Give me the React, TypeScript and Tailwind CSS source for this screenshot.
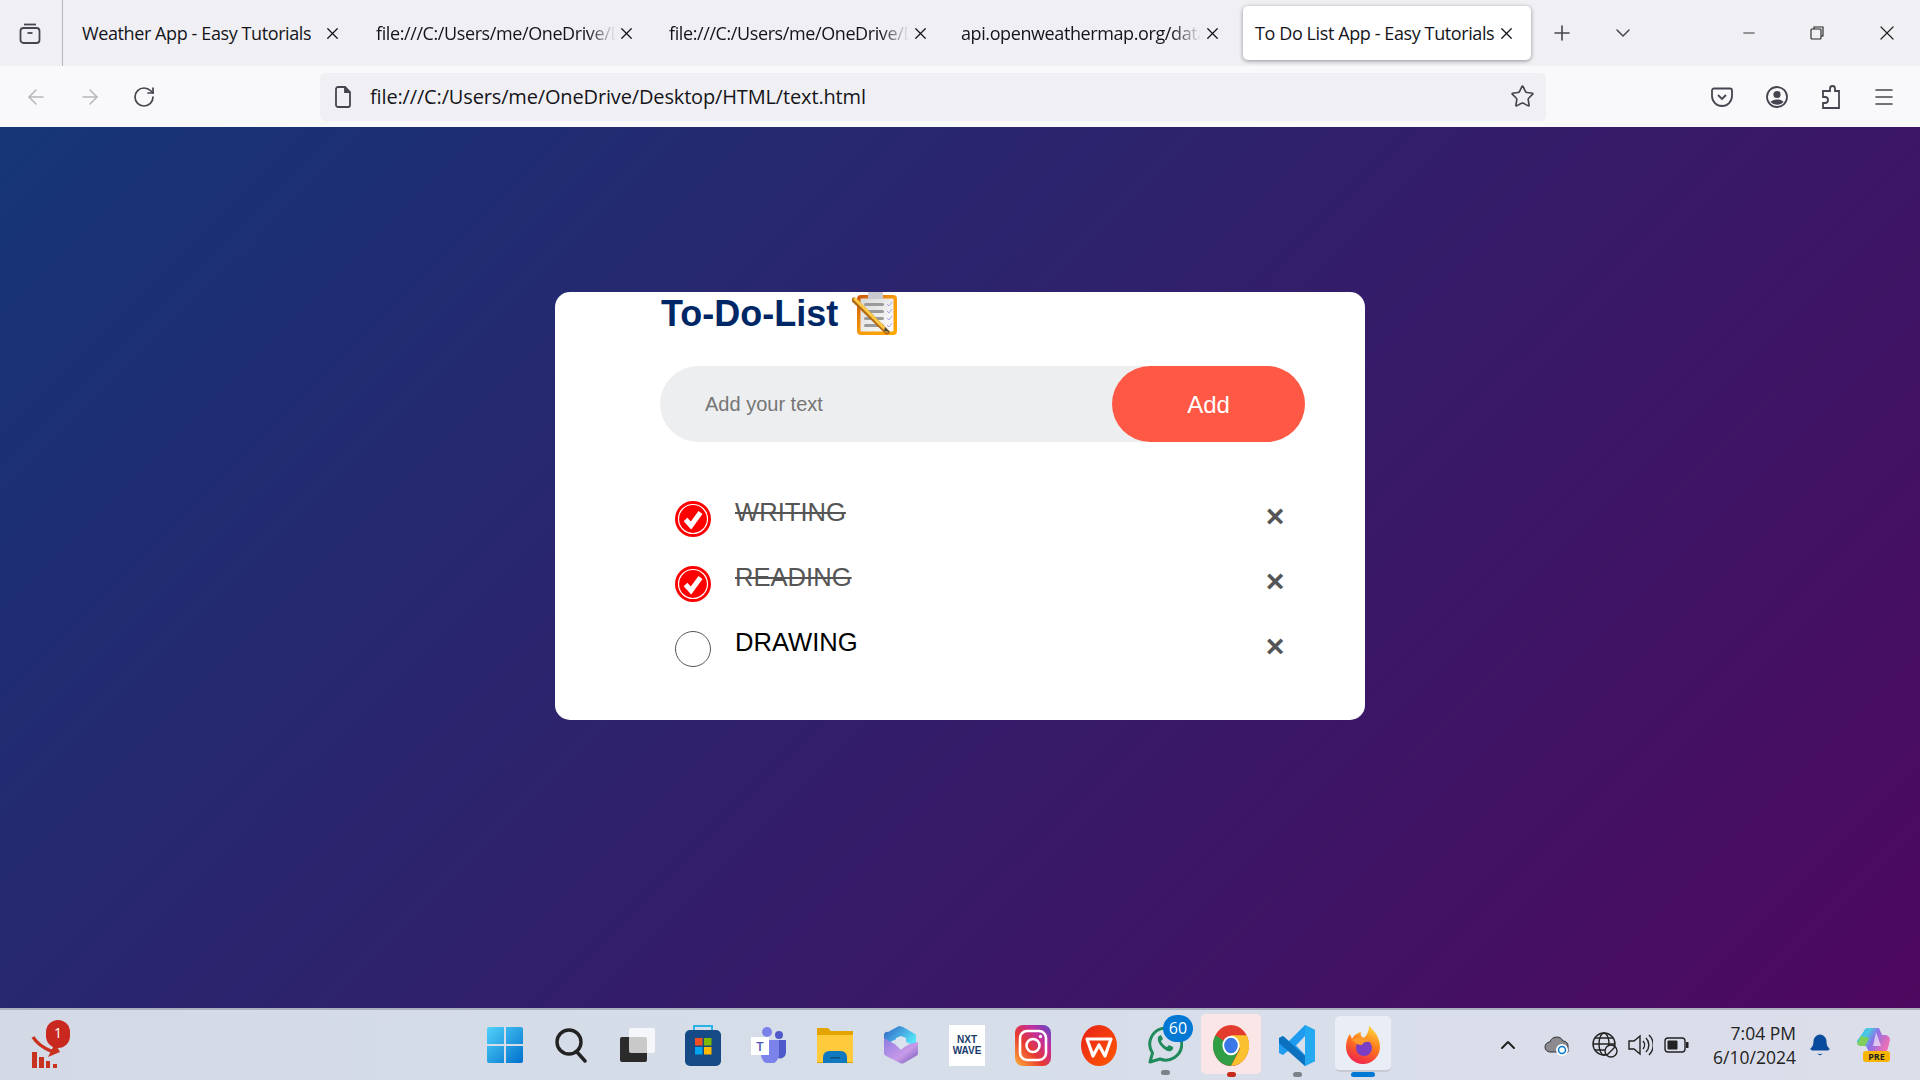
import { ArrowLeft, ArrowRight, RotateCw, Star, Menu, Plus, ChevronDown, ChevronUp, X, Minus, Bell } from "lucide-react";

const uiFont = "font-['Open_Sans',sans-serif]";

function ClipboardIcon() {
  return (
    <svg width="46" height="44" viewBox="0 0 46 44">
      <defs>
        <linearGradient id="board" x1="0" y1="0" x2="1" y2="1">
          <stop offset="0" stopColor="#c9540a" />
          <stop offset="0.5" stopColor="#f79a0e" />
          <stop offset="1" stopColor="#ffa800" />
        </linearGradient>
        <linearGradient id="sheet" x1="0" y1="0" x2="1" y2="1">
          <stop offset="0" stopColor="#d8d8d8" />
          <stop offset="1" stopColor="#ffffff" />
        </linearGradient>
      </defs>
      <rect x="5" y="3" width="40" height="40" rx="4" fill="url(#board)" />
      <rect x="8.5" y="6.5" width="33" height="33" rx="1" fill="url(#sheet)" />
      <rect x="16" y="0" width="15" height="7" rx="1" fill="#c9c9cf" />
      <rect x="12" y="11" width="20" height="3" rx="1.5" fill="#9a9a9a" />
      <rect x="12" y="18" width="20" height="3" rx="1.5" fill="#9a9a9a" />
      <rect x="12" y="25" width="20" height="3" rx="1.5" fill="#9a9a9a" />
      <rect x="12" y="32" width="20" height="3" rx="1.5" fill="#9a9a9a" />
      <path d="M35 12l2 2 3-4M35 19l2 2 3-4M35 26l2 2 3-4M35 33l2 2 3-4" fill="none" stroke="#a8a8f0" strokeWidth="1" />
      <path d="M2 8L35 40" stroke="#b06a10" strokeWidth="5" strokeLinecap="round" />
      <path d="M3 7L35 39" stroke="#ffc94a" strokeWidth="3" strokeLinecap="round" />
      <path d="M33 35l5 5.5-6-2z" fill="#444" />
    </svg>
  );
}

function CheckIcon({ done }: { done: boolean }) {
  if (!done) return <div className="w-[36px] h-[36px] rounded-full border border-[#555] shrink-0" />;
  return (
    <svg width="36" height="36" viewBox="0 0 36 36" className="shrink-0">
      <circle cx="18" cy="18" r="18" fill="#ff0000" />
      <circle cx="18" cy="18" r="14.5" fill="none" stroke="#fff" strokeWidth="1.2" />
      <path d="M10.5 18.5l5.500 6 9.500-13" fill="none" stroke="#fff" strokeWidth="5" strokeLinejoin="miter" />
    </svg>
  );
}

function TodoRow({ label, done }: { label: string; done: boolean }) {
  return (
    <li className="h-[65px] flex items-start pl-[15px]">
      <div className="mt-[14px]">
        <CheckIcon done={done} />
      </div>
      <span
        className={
          "ml-[24px] mt-[8px] text-[25.6px] leading-[34px] " +
          (done ? "text-[#555] line-through" : "text-black")
        }
      >
        {label}
      </span>
      <span className="ml-auto mr-[10px] mt-[9px] w-[40px] h-[40px] flex items-center justify-center text-[32px] font-bold leading-none text-[#555]">
        ×
      </span>
    </li>
  );
}

function Tab({ title, width, close, fade }: { title: string; width: number; close: number; fade?: boolean }) {
  return (
    <div className="relative h-full flex items-center shrink-0" style={{ width }}>
      <span
        className={
          "block overflow-hidden whitespace-nowrap text-[18px] text-[#15141a] tracking-[-0.4px] " +
          (fade ? "[mask-image:linear-gradient(to_right,black_88%,transparent)]" : "")
        }
        style={{ width: fade ? 240 : undefined }}
      >
        {title}
      </span>
      <X size={19} strokeWidth={1.6} className="absolute top-[24px] text-[#15141a]" style={{ left: close - 9 }} />
    </div>
  );
}

function TabBar() {
  return (
    <div className={"h-[66px] bg-[#f0f0f4] flex items-stretch " + uiFont}>
      <div className="w-[63px] border-r border-[#b5b5bb] flex items-center justify-center shrink-0">
        <svg width="24" height="24" viewBox="0 0 24 24" fill="none" stroke="#45454f" strokeWidth="1.8" className="-ml-[2px]">
          <path d="M6 3.5h12" />
          <rect x="2.5" y="7" width="19" height="15" rx="3" />
          <path d="M9.5 12h5" />
        </svg>
      </div>
      <div className="ml-[19px] flex items-center h-full">
        <Tab title="Weather App - Easy Tutorials" width={294} close={250} />
        <Tab title="file:///C:/Users/me/OneDrive/Des" width={293} close={250} fade />
        <Tab title="file:///C:/Users/me/OneDrive/Des" width={292} close={251} fade />
        <Tab title="api.openweathermap.org/data/2.5" width={282} close={251} fade />
      </div>
      <div className="relative mt-[6px] h-[54px] w-[288px] rounded-[5px] bg-white shadow-[0_1px_4px_rgba(0,0,0,0.4)] flex items-center pl-[12px] shrink-0">
        <span className="text-[18px] text-[#15141a] tracking-[-0.4px] whitespace-nowrap">To Do List App - Easy Tutorials</span>
        <X size={19} strokeWidth={1.6} className="absolute left-[254px] top-[18px] text-[#15141a]" />
      </div>
      <div className="ml-[19px] flex items-center">
        <Plus size={24} strokeWidth={1.6} className="text-[#45454f]" />
        <ChevronDown size={24} strokeWidth={1.5} className="ml-[37px] text-[#45454f]" />
        <Minus size={18} strokeWidth={1.2} className="ml-[105px] text-[#222]" />
        <svg width="16" height="16" viewBox="0 0 16 16" fill="none" stroke="#222" strokeWidth="1.1" className="ml-[51px]">
          <rect x="2" y="4" width="10" height="10" rx="1" />
          <path d="M5 4V2h9v9h-2" />
        </svg>
        <X size={24} strokeWidth={1.2} className="ml-[50px] text-[#222]" />
      </div>
    </div>
  );
}

function Toolbar() {
  return (
    <div className={"h-[61px] bg-[#f9f9fb] flex items-center " + uiFont}>
      <ArrowLeft size={24} strokeWidth={1.5} className="ml-[24px] text-[#b6b6ba]" />
      <ArrowRight size={24} strokeWidth={1.5} className="ml-[30px] text-[#b6b6ba]" />
      <RotateCw size={24} strokeWidth={1.7} className="ml-[30px] text-[#45454f]" />
      <div className="ml-[164px] w-[1226px] h-[48px] rounded-[5px] bg-[#f0f0f4] flex items-center shrink-0">
        <svg width="20" height="24" viewBox="0 0 20 24" fill="none" stroke="#45454f" strokeWidth="1.8" className="ml-[13px]">
          <path d="M3 4a2 2 0 012-2h7l5 5v13a2 2 0 01-2 2H5a2 2 0 01-2-2z" />
          <path d="M12 2v5h5" fill="#45454f" />
        </svg>
        <span className="ml-[17px] text-[20px] text-[#15141a] tracking-[-0.15px] whitespace-nowrap">
          file:///C:/Users/me/OneDrive/Desktop/HTML/text.html
        </span>
        <Star size={25} strokeWidth={1.6} className="ml-auto mr-[11px] text-[#45454f]" />
      </div>
      <svg width="24" height="24" viewBox="0 0 24 24" fill="none" stroke="#45454f" strokeWidth="1.8" className="ml-[164px]">
        <path d="M4 3.5h16a2 2 0 012 2V11a10 10 0 01-20 0V5.500a2 2 0 012-2z" />
        <path d="M8 10l4 4 4-4" />
      </svg>
      <svg width="24" height="24" viewBox="0 0 24 24" className="ml-[31px]">
        <circle cx="12" cy="12" r="10" fill="none" stroke="#45454f" strokeWidth="1.8" />
        <circle cx="12" cy="9.5" r="3.6" fill="#45454f" />
        <path d="M5.5 17c2-3.4 11-3.4 13 0a9 9 0 01-13 0z" fill="#45454f" />
      </svg>
      <svg width="24" height="26" viewBox="0 0 24 26" fill="none" stroke="#45454f" strokeWidth="1.8" className="ml-[28px]">
        <path d="M13 7V4.5a2.5 2.5 0 015 0V7h4v17H6v-5h2a3 3 0 000-6H6V7z" />
      </svg>
      <Menu size={24} strokeWidth={1.6} className="ml-[31px] text-[#45454f]" />
    </div>
  );
}

function TodoCard() {
  return (
    <div className="mx-auto mt-[165px] w-[810px] h-[428px] rounded-[15px] bg-white pl-[105px] pr-[60px] font-['Liberation_Sans',Arial,sans-serif]">
      <div className="h-[44px] flex items-center">
        <h2 className="text-[36px] leading-none font-bold text-[#002765] ml-[1px] mt-[-1px]">To-Do-List</h2>
        <div className="ml-[14px]">
          <ClipboardIcon />
        </div>
      </div>
      <div className="mt-[30px] h-[76px] rounded-full bg-[#edeef0] flex items-center">
        <input
          className="flex-1 min-w-0 h-full bg-transparent outline-none pl-[45px] text-[20px] placeholder:text-[#757575]"
          placeholder="Add your text"
        />
        <button className="w-[193px] h-full rounded-full bg-[#ff5945] text-white text-[24px] pt-[1px] shrink-0">Add</button>
      </div>
      <ul className="mt-[45px]">
        <TodoRow label="WRITING" done />
        <TodoRow label="READING" done />
        <TodoRow label="DRAWING" done={false} />
      </ul>
    </div>
  );
}

function Slot({ children, tile, dot }: { children: React.ReactNode; tile?: string; dot?: string }) {
  return (
    <div className="relative w-[66px] h-[70px] flex items-center justify-center shrink-0">
      {tile && <div className={"absolute rounded-[5px] " + tile} />}
      <div className="relative flex items-center justify-center">{children}</div>
      {dot && <div className={"absolute rounded-full " + dot} />}
    </div>
  );
}

function Taskbar() {
  return (
    <div className={"h-[72px] border-t-2 border-[#aab0bd] bg-gradient-to-r from-[#d3dae6] via-[#d6deea] to-[#dcdeea] flex items-center " + uiFont}>
      <div className="relative ml-[30px] w-[40px] h-[48px] shrink-0">
        <svg width="40" height="48" viewBox="0 0 40 48" className="absolute top-[1px] left-0">
          <path d="M3 15c4 7 10 11 20 15" fill="none" stroke="#c8321e" strokeWidth="3.5" />
          <path d="M18 35l12-5-5-9z" fill="#c8321e" />
          <rect x="2" y="30" width="5" height="16" fill="#c8321e" />
          <rect x="9" y="35" width="5" height="11" fill="#c8321e" />
          <rect x="16" y="39" width="4" height="7" fill="#c8321e" />
          <rect x="23" y="42" width="4" height="4" fill="#c8321e" />
        </svg>
        <span className="absolute left-[16px] top-[-1px] w-[24px] h-[28px] rounded-full bg-[#c8281e] text-white text-[14px] leading-[26px] text-center">1</span>
      </div>
      <div className="ml-[402px] flex items-center">
        <Slot>
          <svg width="36" height="36" viewBox="0 0 36 36">
            <defs>
              <linearGradient id="win" x1="0" y1="0" x2="1" y2="1">
                <stop offset="0" stopColor="#52d2fb" />
                <stop offset="1" stopColor="#0070cc" />
              </linearGradient>
            </defs>
            <path d="M0 2a2 2 0 012-2h15v17H0zM19 0h15a2 2 0 012 2v15H19zM0 19h17v17H2a2 2 0 01-2-2zM19 19h17v15a2 2 0 01-2 2H19z" fill="url(#win)" />
          </svg>
        </Slot>
        <Slot>
          <svg width="36" height="36" viewBox="0 0 36 36" fill="none" stroke="#222" strokeWidth="3.4">
            <circle cx="16" cy="15" r="12" />
            <path d="M24 25l8 9" strokeLinecap="round" />
          </svg>
        </Slot>
        <Slot>
          <svg width="36" height="36" viewBox="0 0 36 36">
            <rect x="1" y="10" width="27" height="25" rx="2" fill="#2b2b2b" />
            <rect x="10" y="1" width="26" height="25" rx="2" fill="#ffffff" fillOpacity="0.75" />
          </svg>
        </Slot>
        <Slot>
          <svg width="36" height="42" viewBox="0 0 36 42">
            <path d="M9 7V2h18v5" fill="none" stroke="#28b4e8" strokeWidth="2" />
            <rect x="0" y="6" width="36" height="36" rx="5" fill="#154a86" />
            <rect x="10" y="14" width="7.5" height="7.5" fill="#f25022" />
            <rect x="19" y="14" width="7.5" height="7.5" fill="#7fba00" />
            <rect x="10" y="23" width="7.5" height="7.5" fill="#00a4ef" />
            <rect x="19" y="23" width="7.5" height="7.5" fill="#ffb900" />
          </svg>
        </Slot>
        <Slot>
          <div className="relative w-[36px] h-[36px]">
            <svg width="36" height="36" viewBox="0 0 36 36">
              <circle cx="16" cy="5" r="5" fill="#7b83eb" />
              <circle cx="28" cy="8" r="4" fill="#5059c9" />
              <path d="M22 13h13v13a6 6 0 01-8 5z" fill="#5059c9" />
              <path d="M8 13h20v15a9 9 0 01-18 0z" fill="#7b83eb" />
            </svg>
            <span className="absolute left-0 top-[10px] w-[18px] h-[18px] bg-white text-[#4b53bc] text-[13px] leading-[18px] text-center font-semibold">T</span>
          </div>
        </Slot>
        <Slot>
          <svg width="38" height="36" viewBox="0 0 38 36">
            <path d="M1 1h11l3 3h22v32H1z" fill="#e3a400" />
            <path d="M1 8h36v27H1z" fill="#ffcb3d" />
            <path d="M7 30a6 6 0 016-6h12a6 6 0 016 6v6H7z" fill="#0f78bf" />
            <rect x="14" y="30" width="10" height="1.5" fill="#0a4f80" />
          </svg>
        </Slot>
        <Slot>
          <svg width="34" height="38" viewBox="0 0 34 38">
            <defs>
              <linearGradient id="m365a" x1="0" y1="0" x2="1" y2="0.6">
                <stop offset="0" stopColor="#2f5fc4" />
                <stop offset="1" stopColor="#56e3f8" />
              </linearGradient>
              <linearGradient id="m365b" x1="0" y1="0" x2="1" y2="1">
                <stop offset="0" stopColor="#8d7be0" />
                <stop offset="0.6" stopColor="#c89ae8" />
                <stop offset="1" stopColor="#6a58b8" />
              </linearGradient>
            </defs>
            <path d="M4 6l11-6 4 1 12 7a3 3 0 011 3v9l-8-3-7-6-9 4-8 5v-11a3 3 0 014-3z" fill="url(#m365a)" />
            <path d="M0 12l12 7 5 4 9-5 8-2v11a3 3 0 01-2 3l-12 7a4 4 0 01-4 0L2 30a3 3 0 01-2-3z" fill="url(#m365b)" />
            <path d="M12 12l5-2 5 2v7l-5 5-5-5z" fill="#dbe3ef" />
          </svg>
        </Slot>
        <Slot>
          <div className="w-[36px] h-[41px] bg-white flex flex-col items-center justify-center text-[#1a3a6b] text-[10px] leading-[11px] font-bold font-['Liberation_Sans',sans-serif]">
            <span>NXT</span>
            <span>WAVE</span>
          </div>
        </Slot>
        <Slot>
          <svg width="36" height="41" viewBox="0 0 36 41">
            <defs>
              <linearGradient id="ig" x1="0" y1="1" x2="1" y2="0">
                <stop offset="0" stopColor="#fdb13b" />
                <stop offset="0.4" stopColor="#e8382e" />
                <stop offset="0.7" stopColor="#c42f9c" />
                <stop offset="1" stopColor="#5a49c9" />
              </linearGradient>
            </defs>
            <rect width="36" height="41" rx="8" fill="url(#ig)" />
            <rect x="5" y="6" width="26" height="29" rx="7" fill="none" stroke="#fff" strokeWidth="2.6" />
            <circle cx="18" cy="20.5" r="6.5" fill="none" stroke="#fff" strokeWidth="2.6" />
            <circle cx="25.5" cy="11.5" r="1.7" fill="#fff" />
          </svg>
        </Slot>
        <Slot>
          <svg width="36" height="41" viewBox="0 0 36 41">
            <defs>
              <linearGradient id="wps" x1="0" y1="0" x2="1" y2="1">
                <stop offset="0" stopColor="#e8201a" />
                <stop offset="1" stopColor="#ff5a00" />
              </linearGradient>
            </defs>
            <ellipse cx="18" cy="20.5" rx="18" ry="20.5" fill="url(#wps)" />
            <path d="M6 14h24l-6 17-6-11-6 11z" fill="none" stroke="#fff" strokeWidth="3.2" strokeLinejoin="round" />
          </svg>
        </Slot>
        <Slot dot="bottom-[5px] left-[29px] w-[9px] h-[5px] bg-[#7d8188]">
          <div className="relative">
            <svg width="36" height="40" viewBox="0 0 36 40" fill="none">
              <path d="M3 37l2.5-9A16 16 0 1113 34z" stroke="#1f8a5b" strokeWidth="3" strokeLinejoin="round" />
              <path d="M12 11c-2 2-1.500 6 2 10s7 6 10 5c2-1 2.500-3 2-4l-4-2-2 2c-2-.5-5-3.500-6-6l2-2-2-4z" fill="#1f8a5b" />
            </svg>
            <span className="absolute left-[16px] top-[-10px] w-[30px] h-[27px] rounded-full bg-[#0078d4] text-white text-[16px] leading-[27px] text-center">60</span>
          </div>
        </Slot>
        <Slot tile="left-[3px] top-[4px] w-[60px] h-[60px] bg-[#fbe6e7]" dot="bottom-[3px] left-[29px] w-[9px] h-[5px] bg-[#c42b1c]">
          <svg width="36" height="41" viewBox="0 0 36 36" preserveAspectRatio="none">
            <circle cx="18" cy="18" r="18" fill="#e33b2e" />
            <path d="M18 18L2.400 9A18 18 0 0018 36l9-16z" fill="#2f9e44" />
            <path d="M18 9h15.600A18 18 0 0118 36l9-15z" fill="#fbc02d" />
            <circle cx="18" cy="18" r="8.600" fill="#fff" />
            <circle cx="18" cy="18" r="6.800" fill="#3b78e7" />
          </svg>
        </Slot>
        <Slot dot="bottom-[3px] left-[29px] w-[9px] h-[5px] bg-[#7d8188]">
          <svg width="36" height="41" viewBox="0 0 36 41">
            <path d="M26 0l10 5v31l-10 5-16-16-6 5-4-2v-15l4-2 6 5zM26 11l-9 9.500 9 9.500z" fill="#1f9cf0" />
            <path d="M26 0l10 5v31l-10 5z" fill="#25a9f0" />
            <path d="M0 13l4-2 22 20v10L0 18z" fill="#0c72bf" />
          </svg>
        </Slot>
        <Slot tile="left-[5px] top-[6px] w-[56px] h-[56px] bg-[#e8edf6] border-b-2 border-[#c5cad4]" dot="bottom-[3px] left-[21px] w-[24px] h-[5px] bg-[#0078d4]">
          <svg width="36" height="40" viewBox="0 0 36 40">
            <defs>
              <linearGradient id="ff" x1="0.7" y1="0" x2="0.3" y2="1">
                <stop offset="0" stopColor="#ffd43a" />
                <stop offset="0.45" stopColor="#ff7a1a" />
                <stop offset="1" stopColor="#f0204f" />
              </linearGradient>
            </defs>
            <path d="M24 1c6 5 11 12 11 21a17 17 0 11-34 0c0-5 1-9 4-13l2 5c2-4 5-6 9-7-1 3 0 5 3 6 3-3 5-7 5-12z" fill="url(#ff)" />
            <circle cx="19" cy="23" r="8" fill="#7a3fc4" />
            <path d="M7 15c6-4 14-4 19 2-5-1-8 0-9 3-4 0-7-2-10-5z" fill="#ff9a2a" />
          </svg>
        </Slot>
      </div>
      <div className="ml-[100px] flex items-center shrink-0">
        <ChevronUp size={24} strokeWidth={2} className="text-[#222]" />
        <svg width="26" height="22" viewBox="0 0 26 22" className="ml-[24px]">
          <path d="M6 18a5 5 0 010-10 7 7 0 0113-1 5 5 0 015 6v5z" fill="#8b8b8f" stroke="#333" strokeWidth="1" />
          <circle cx="18" cy="16" r="6" fill="#fff" />
          <circle cx="18" cy="16" r="3.500" fill="none" stroke="#0078d4" strokeWidth="1.500" />
        </svg>
        <svg width="26" height="26" viewBox="0 0 26 26" fill="none" stroke="#222" strokeWidth="1.400" className="ml-[22px]">
          <circle cx="12" cy="12" r="11" />
          <ellipse cx="12" cy="12" rx="5" ry="11" />
          <path d="M1 12h22M3 6h18M3 18h12" />
          <circle cx="19" cy="19" r="6" fill="#dcdeea" />
          <path d="M15 23l8-8" />
        </svg>
        <svg width="26" height="24" viewBox="0 0 26 24" fill="none" stroke="#222" strokeWidth="1.400" className="ml-[9px]">
          <path d="M2 8h5l6-5v18l-6-5H2z" />
          <path d="M16 8a6 6 0 010 8M19 5a10 10 0 010 14M22 2a14 14 0 010 20" />
        </svg>
        <svg width="25" height="16" viewBox="0 0 25 16" className="ml-[11px]">
          <rect x="1" y="1" width="20" height="14" rx="3" fill="none" stroke="#222" strokeWidth="1.400" />
          <rect x="3.500" y="3.500" width="10" height="9" rx="1" fill="#222" />
          <rect x="22" y="5" width="2.500" height="6" fill="#222" />
        </svg>
        <div className="ml-[12px] w-[95px] text-right text-[#222] text-[17.500px] leading-[24px]">
          <div>7:04 PM</div>
          <div>6/10/2024</div>
        </div>
        <Bell size={24} strokeWidth={1} fill="#0a4a9c" className="ml-[12px] text-[#0a4a9c]" />
        <div className="relative ml-[24px] w-[34px] h-[34px]">
          <svg width="34" height="30" viewBox="0 0 34 30">
            <defs>
              <linearGradient id="cop" x1="0" y1="0" x2="1" y2="0.4">
                <stop offset="0" stopColor="#2fb9ef" />
                <stop offset="0.35" stopColor="#4cc9e0" />
                <stop offset="0.6" stopColor="#8d6fe8" />
                <stop offset="1" stopColor="#e86fb8" />
              </linearGradient>
            </defs>
            <path d="M8 3a4 4 0 014-3h11l3 7h3a5 5 0 015 5l-2 8a5 5 0 01-5 4H13l-3-6H6a5 5 0 01-5-5z" fill="url(#cop)" />
            <path d="M1 16l4-8 8 2-4 8H6a5 5 0 01-5-2z" fill="#7fd05a" />
            <path d="M20 4l5 14h-8z" fill="#fff" fillOpacity="0.6" />
          </svg>
          <span className="absolute left-[7px] top-[23px] w-[27px] h-[11px] rounded-[3px] bg-[#f7b500] text-[#222] text-[9px] leading-[11px] text-center font-bold">PRE</span>
        </div>
      </div>
    </div>
  );
}

export default function App() {
  return (
    <div className="w-[1920px] h-[1080px] overflow-hidden flex flex-col">
      <TabBar />
      <Toolbar />
      <div className="flex-1 bg-[linear-gradient(135deg,#153677,#4e085f)] overflow-hidden">
        <TodoCard />
      </div>
      <Taskbar />
    </div>
  );
}
